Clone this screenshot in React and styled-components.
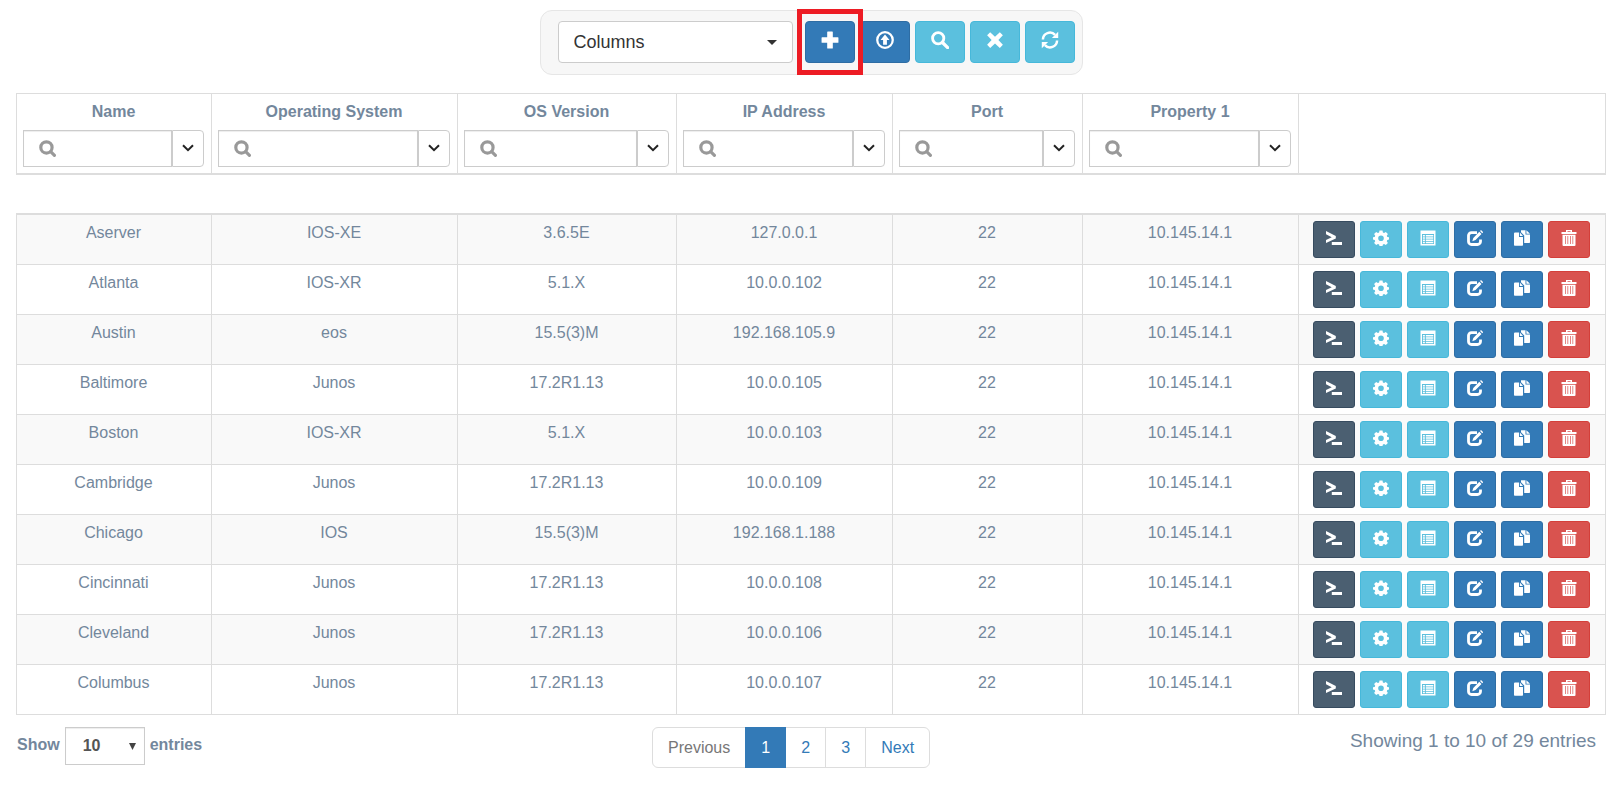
import React from "react";
import styled, { createGlobalStyle, css } from "styled-components";

const GlobalStyle = createGlobalStyle`
  *, *::before, *::after { box-sizing: border-box; }
  body {
    margin: 0;
    background: #fff;
    color: #73879c;
    font: 16px/23px "Liberation Sans", Arial, sans-serif;
  }
  button, input, select { font: inherit; margin: 0; }
`;

const line = "#ddd";

const Page = styled.main`
  padding: 10px 14px 16px 16px;
`;

const Toolbar = styled.div`
  display: flex;
  align-items: center;
  width: fit-content;
  margin: 0 auto 18px;
  padding: 10px 7px 11px 17px;
  gap: 5px;
  background: #f7f7f7;
  border: 1px solid #e6e6e6;
  border-radius: 12px;
`;

const ColumnsPicker = styled.div`
  position: relative;
  margin-right: 7px;
  color: #333;
  > svg {
    position: absolute;
    right: 16px;
    top: 19px;
    pointer-events: none;
  }
`;

const ColumnsSelect = styled.select`
  display: block;
  appearance: none;
  width: 235px;
  height: 42px;
  padding: 0 15px;
  color: #333;
  font-size: 18px;
  background: #fff;
  border: 1px solid #ccc;
  border-radius: 4px;
`;

const tones = {
  primary: css`background: #337ab7; border-color: #2e6da4;`,
  info: css`background: #5bc0de; border-color: #46b8da;`,
  dark: css`background: #4b5f71; border-color: #364b5f;`,
  danger: css`background: #d9534f; border-color: #d43f3a;`,
};

const IconButton = styled.button`
  display: flex;
  align-items: center;
  justify-content: center;
  flex: none;
  width: ${(p) => (p.$large ? 50 : 42)}px;
  height: ${(p) => (p.$large ? 42 : 37)}px;
  padding: 0 0 ${(p) => (p.$large ? 4 : 3)}px;
  color: #fff;
  border: 1px solid;
  border-radius: ${(p) => (p.$large ? 4 : 3)}px;
  cursor: pointer;
  ${(p) => tones[p.$tone]}
`;

const Highlight = styled.div`
  position: relative;
  z-index: 1;
  &::after {
    content: "";
    position: absolute;
    inset: -12px -8px;
    border: 5px solid #ed1c24;
    pointer-events: none;
  }
`;

const Table = styled.table`
  width: 100%;
  table-layout: fixed;
  border-collapse: separate;
  border-spacing: 0;
  text-align: center;
`;

const HeadCell = styled.th`
  padding: 6px 7px 6px 6px;
  vertical-align: top;
  border: solid ${line};
  border-width: 1px 1px 2px 0;
  &:first-child { border-left-width: 1px; }
`;

const Filter = styled.div`
  display: flex;
  position: relative;
  margin-top: 7px;
  > svg {
    position: absolute;
    left: 16px;
    top: 10px;
    color: #999;
    pointer-events: none;
  }
`;

const FilterInput = styled.input`
  flex: 1;
  min-width: 0;
  height: 37px;
  padding: 0 8px 0 40px;
  color: #555;
  background: #fff;
  border: 1px solid #ccc;
  border-radius: 0;
  box-shadow: inset 0 1px 1px rgba(0, 0, 0, 0.075);
`;

const FilterToggle = styled.button`
  display: flex;
  align-items: center;
  justify-content: center;
  width: 32px;
  height: 37px;
  padding: 0 0 1px;
  color: #222;
  background: #fff;
  border: 1px solid #ccc;
  border-radius: 0 4px 4px 0;
`;

const Spacer = styled.td`
  height: 38px;
  padding: 0;
`;

const Cell = styled.td`
  padding: 6px 7px 6px 6px;
  vertical-align: top;
  border: solid ${line};
  border-width: 0 1px 1px 0;
  &:first-child { border-left-width: 1px; }
`;

const Row = styled.tr`
  background: ${(p) => (p.$odd ? "#f9f9f9" : "#fff")};
  &:first-child > ${Cell} { border-top-width: 2px; }
`;

const Actions = styled.div`
  display: flex;
  justify-content: center;
  gap: 5px;
`;

const Footer = styled.footer`
  display: grid;
  grid-template-columns: 40% auto 1fr;
  align-items: start;
  padding-top: 12px;
`;

const Length = styled.label`
  display: flex;
  gap: 5px;
  padding-left: 1px;
  font-weight: bold;
  line-height: 36px;
`;

const LengthPicker = styled.span`
  position: relative;
  > svg {
    position: absolute;
    right: 9px;
    top: 16px;
    pointer-events: none;
  }
`;

const LengthSelect = styled.select`
  display: block;
  appearance: none;
  width: 80px;
  height: 38px;
  padding: 0 17px;
  font-weight: bold;
  color: #555;
  background: #fff;
  border: 1px solid #ccc;
  border-radius: 0;
  box-shadow: inset 0 1px 1px rgba(0, 0, 0, 0.075);
`;

const Pages = styled.ul`
  display: flex;
  margin: 0;
  padding: 0;
  list-style: none;
`;

const PageLink = styled.a`
  display: block;
  position: relative;
  min-width: 41px;
  margin-left: -1px;
  padding: 8px 15px;
  text-align: center;
  text-decoration: none;
  color: ${(p) => (p.$active ? "#fff" : p.$muted ? "#777" : "#337ab7")};
  background: ${(p) => (p.$active ? "#337ab7" : "#fff")};
  border: 1px solid ${(p) => (p.$active ? "#337ab7" : line)};
  z-index: ${(p) => (p.$active ? 1 : 0)};
  li:first-child > & { margin-left: 0; border-radius: 6px 0 0 6px; }
  li:last-child > & { border-radius: 0 6px 6px 0; }
`;

const Info = styled.div`
  padding-right: 10px;
  text-align: right;
  font-size: 19px;
  line-height: 27px;
`;

const Svg = ({ size = 16, children }) => (
  <svg width={size} height={size} viewBox="0 0 16 16" fill="currentColor" aria-hidden="true">
    {children}
  </svg>
);

const shapes = {
  plus: <path d="M6 .5h4q.5 0 .5.5v4.500h4.500q.5 0 .5.5v4q0 .5-.5.5h-4.500v4.500q0 .5-.5.5h-4q-.5 0-.5-.5v-4.500H1q-.5 0-.5-.5V6q0-.5.5-.5h4.500V1q0-.5.5-.5z" />,
  upload: (
    <>
      <circle cx="8" cy="8" r="6.900" fill="none" stroke="currentColor" strokeWidth="2" />
      <path d="M8 3.200 12 8H9.700v4.300H6.300V8H4z" />
    </>
  ),
  search: (
    <g fill="none" stroke="currentColor">
      <circle cx="6.400" cy="6.400" r="5" strokeWidth="2.500" />
      <path d="m10.200 10.200 4.600 4.600" strokeWidth="2.900" strokeLinecap="round" />
    </g>
  ),
  filter: (
    <g fill="none" stroke="currentColor">
      <circle cx="7" cy="7" r="5.300" strokeWidth="3" />
      <path d="m11 11 3.500 3.500" strokeWidth="3" strokeLinecap="round" />
    </g>
  ),
  remove: <path d="M3.700 1 8 5l4.300-4L15 3.700 11 8l4 4.300-2.700 2.700L8 11l-4.300 4L1 12.300 5 8 1 3.700z" />,
  refresh: (
    <>
      <path d="M1.700 7.500a6.200 6.200 0 0 1 10.800-4M14.300 8.500a6.200 6.200 0 0 1-10.800 4" fill="none" stroke="currentColor" strokeWidth="2.200" />
      <path d="M15.300.6v5.600H9.700zM.7 15.400V9.800h5.600z" />
    </>
  ),
  terminal: <path d="M0 1 9.800 6v2.400L0 13V9.900l5.700-2.700L0 4.300zM5.800 12H16v3H5.800z" />,
  cog: (
    <path
      fillRule="evenodd"
      d="M6.500.5h3l.4 2 1.200.5 1.700-1.100 2.100 2.100L13.800 5.700l.5 1.200 1.700.3v2.400l-1.700.4-.5 1.200 1.100 1.700-2.100 2.100-1.700-1.100-1.200.5-.4 1.600h-3l-.4-1.600-1.200-.5L3.200 15l-2.100-2.100 1.100-1.700L1.700 10 0 9.600V7.200l1.700-.3.5-1.200L1.100 4l2.100-2.100L4.900 3l1.200-.5zM8 5.400a2.800 2.800 0 1 0 0 5.600 2.800 2.800 0 0 0 0-5.600z"
    />
  ),
  list: (
    <path
      fillRule="evenodd"
      d="M.5.5h15v15H.5zM2 4v10h12V4zM2.900 4.900h2v1.500h-2zm2.900 0h7.500v1.500H5.800zM2.900 7.200h2v1.500h-2zm2.900 0h7.500v1.500H5.800zM2.900 9.500h2V11h-2zm2.900 0h7.500V11H5.800zM2.900 11.800h2v1.500h-2zm2.900 0h7.500v1.500H5.800z"
    />
  ),
  edit: (
    <>
      <path d="M10 2.600H4.500a3 3 0 0 0-3 3v5.900a3 3 0 0 0 3 3h6a3 3 0 0 0 3-3V9.500" fill="none" stroke="currentColor" strokeWidth="2.800" />
      <path d="m12.300 1.700 2.200 2.200-6 6.200-3.200 1.100 1-3.300zM13 1l1-1 2.200 2.200-1 1z" />
    </>
  ),
  copy: (
    <>
      <path d="M0 3.500q0-1 1-1h4V7h4v8q0 .8-.8.800H.8Q0 15.800 0 15zM5.900 2.600 9 6H5.900z" />
      <path d="M7 .3h4.500V4.500H16v7.700q0 .8-.8.800h-5V5.600L7 2.200zM12.400.3 16 3.700h-3.600z" />
    </>
  ),
  trash: (
    <>
      <path d="M5 0h6v2h4.500v2H.5V2H5zm1.500 1.200V2h3v-.8z" fillRule="evenodd" />
      <path d="M1.500 4.800h13V15q0 1-1 1h-11q-1 0-1-1zM4 6.100v8h.7v-8zm2.500 0v8h.7v-8zm2.500 0v8h.7v-8zm2.500 0v8h.7v-8z" fillRule="evenodd" />
    </>
  ),
};

const Icon = ({ name, size }) => <Svg size={size}>{shapes[name]}</Svg>;

const Caret = () => (
  <svg width="10" height="5" viewBox="0 0 10 5" fill="currentColor" aria-hidden="true">
    <path d="M0 0h10L5 5z" />
  </svg>
);

const Triangle = () => (
  <svg width="7" height="7" viewBox="0 0 7 7" fill="#444" aria-hidden="true">
    <path d="M0 0h7L3.500 7z" />
  </svg>
);

const Chevron = () => (
  <svg width="12" height="8" viewBox="0 0 12 8" fill="none" stroke="currentColor" strokeWidth="2" aria-hidden="true">
    <path d="m1 1.200 5 5 5-5" />
  </svg>
);

const columns = [
  ["Name", 196],
  ["Operating System", 246],
  ["OS Version", 219],
  ["IP Address", 216],
  ["Port", 190],
  ["Property 1", 216],
];

const devices = [
  ["Aserver", "IOS-XE", "3.6.5E", "127.0.0.1"],
  ["Atlanta", "IOS-XR", "5.1.X", "10.0.0.102"],
  ["Austin", "eos", "15.5(3)M", "192.168.105.9"],
  ["Baltimore", "Junos", "17.2R1.13", "10.0.0.105"],
  ["Boston", "IOS-XR", "5.1.X", "10.0.0.103"],
  ["Cambridge", "Junos", "17.2R1.13", "10.0.0.109"],
  ["Chicago", "IOS", "15.5(3)M", "192.168.1.188"],
  ["Cincinnati", "Junos", "17.2R1.13", "10.0.0.108"],
  ["Cleveland", "Junos", "17.2R1.13", "10.0.0.106"],
  ["Columbus", "Junos", "17.2R1.13", "10.0.0.107"],
];

const rowActions = [
  ["terminal", "dark", "Open terminal"],
  ["cog", "info", "Settings"],
  ["list", "info", "Details"],
  ["edit", "primary", "Edit"],
  ["copy", "primary", "Duplicate"],
  ["trash", "danger", "Delete"],
];

const toolActions = [
  ["upload", "primary", "Upload"],
  ["search", "info", "Search"],
  ["remove", "info", "Clear"],
  ["refresh", "info", "Refresh"],
];

export default function App() {
  return (
    <Page>
      <GlobalStyle />
      <Toolbar>
        <ColumnsPicker>
          <ColumnsSelect aria-label="Columns">
            <option>Columns</option>
          </ColumnsSelect>
          <Caret />
        </ColumnsPicker>
        <Highlight>
          <IconButton type="button" $large $tone="primary" aria-label="Add">
            <Icon name="plus" size={18} />
          </IconButton>
        </Highlight>
        {toolActions.map(([name, tone, label]) => (
          <IconButton key={name} type="button" $large $tone={tone} aria-label={label}>
            <Icon name={name} size={18} />
          </IconButton>
        ))}
      </Toolbar>

      <Table>
        <colgroup>
          {columns.map(([name, width]) => (
            <col key={name} width={width} />
          ))}
          <col width={307} />
        </colgroup>
        <thead>
          <tr>
            {columns.map(([name]) => (
              <HeadCell key={name} scope="col">
                {name}
                <Filter>
                  <FilterInput type="text" aria-label={`Filter ${name}`} />
                  <Icon name="filter" size={17} />
                  <FilterToggle type="button" aria-label={`${name} filter options`}>
                    <Chevron />
                  </FilterToggle>
                </Filter>
              </HeadCell>
            ))}
            <HeadCell as="td" />
          </tr>
        </thead>
        <tbody aria-hidden="true">
          <tr>
            <Spacer colSpan={7} />
          </tr>
        </tbody>
        <tbody>
          {devices.map((device, i) => (
            <Row key={device[0]} $odd={i % 2 === 0}>
              {[...device, "22", "10.145.14.1"].map((value, c) => (
                <Cell key={c}>{value}</Cell>
              ))}
              <Cell>
                <Actions>
                  {rowActions.map(([name, tone, label]) => (
                    <IconButton key={name} type="button" $tone={tone} aria-label={`${label} ${device[0]}`}>
                      <Icon name={name} />
                    </IconButton>
                  ))}
                </Actions>
              </Cell>
            </Row>
          ))}
        </tbody>
      </Table>

      <Footer>
        <Length>
          Show
          <LengthPicker>
            <LengthSelect defaultValue="10">
              <option>10</option>
              <option>25</option>
              <option>50</option>
            </LengthSelect>
            <Triangle />
          </LengthPicker>
          entries
        </Length>
        <nav aria-label="Pages">
          <Pages>
            <li><PageLink href="#previous" $muted>Previous</PageLink></li>
            <li><PageLink href="#1" $active aria-current="page">1</PageLink></li>
            <li><PageLink href="#2">2</PageLink></li>
            <li><PageLink href="#3">3</PageLink></li>
            <li><PageLink href="#next">Next</PageLink></li>
          </Pages>
        </nav>
        <Info>Showing 1 to 10 of 29 entries</Info>
      </Footer>
    </Page>
  );
}
